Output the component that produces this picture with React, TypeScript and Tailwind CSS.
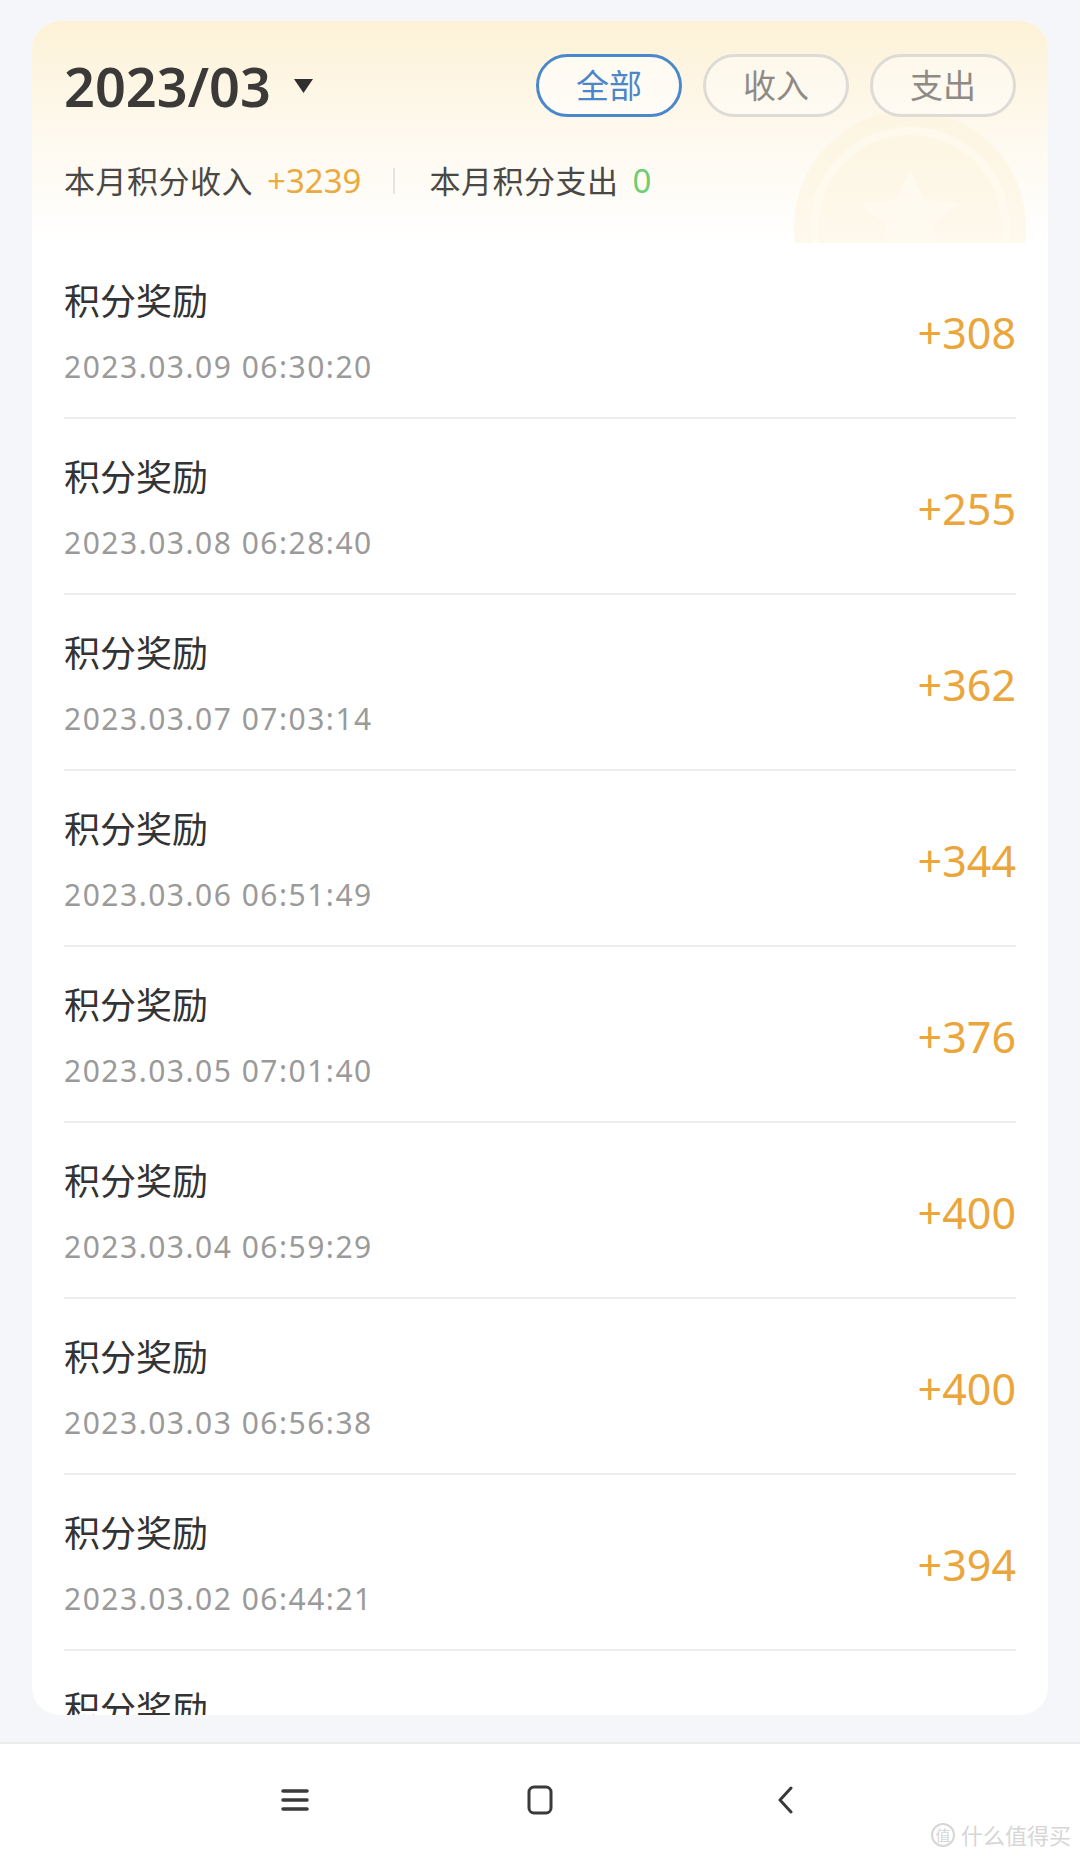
import React from 'react';

const records = [
  { date: '2023.03.09 06:30:20', amount: '+308' },
  { date: '2023.03.08 06:28:40', amount: '+255' },
  { date: '2023.03.07 07:03:14', amount: '+362' },
  { date: '2023.03.06 06:51:49', amount: '+344' },
  { date: '2023.03.05 07:01:40', amount: '+376' },
  { date: '2023.03.04 06:59:29', amount: '+400' },
  { date: '2023.03.03 06:56:38', amount: '+400' },
  { date: '2023.03.02 06:44:21', amount: '+394' },
  { date: '2023.03.01 06:40:12', amount: '+400' },
];

const font = { fontFamily: '"Noto Sans", "Noto Sans CJK SC", sans-serif' };

const CoinMark = () => (
  <svg className="absolute left-[761px] top-[89px]" width="234" height="133" viewBox="0 0 234 133">
    <circle cx="117" cy="117" r="116" fill="#fdf1d6" opacity="0.45" />
    <circle cx="117" cy="117" r="96" fill="none" stroke="#fffbf2" strokeWidth="8" opacity="0.6" />
    <path
      d="M117 58 L131 90 L166 93 L140 116 L148 150 L117 132 L86 150 L94 116 L68 93 L103 90 Z"
      fill="#fffbf1"
      opacity="0.7"
    />
  </svg>
);

const FilterButton = ({ label, active }: { label: string; active?: boolean }) => (
  <button
    className={
      active
        ? 'h-[63px] w-[146px] rounded-full border-[3px] border-[#4a87cb] bg-white/60 text-[33px] text-[#4a86c8]'
        : 'h-[63px] w-[146px] rounded-full border-[3px] border-[#dedbd6] bg-white/40 text-[33px] text-[#8e8b87]'
    }
  >
    {label}
  </button>
);

export default function App() {
  return (
    <div className="flex h-[1856px] w-[1080px] flex-col overflow-hidden bg-[#f5f6f9]" style={font}>
      {/* Card area */}
      <div className="flex-1 min-h-0 px-[32px] pt-[21px] pb-[27px]">
        <div className="flex h-full flex-col overflow-hidden rounded-[28px] bg-white">
          {/* Header */}
          <div className="relative h-[222px] flex-shrink-0 overflow-hidden bg-gradient-to-b from-[#fdf2d7] via-[#fef9ee] to-white px-[32px] pt-[33px]">
            <CoinMark />
            <div className="relative flex h-[63px] items-center justify-between">
              <div className="flex items-center">
                <span className="text-[54px] font-semibold leading-none text-[#3b3a38]">2023/03</span>
                <svg className="ml-[23px]" width="19" height="14" viewBox="0 0 19 14">
                  <path d="M0 0 H19 L9.5 14 Z" fill="#2f2f2f" />
                </svg>
              </div>
              <div className="flex gap-[21px]">
                <FilterButton label="全部" active />
                <FilterButton label="收入" />
                <FilterButton label="支出" />
              </div>
            </div>
            <div className="relative mt-[44px] flex h-[40px] items-center text-[31px] text-[#4a4845]">
              <span className="tracking-[0.5px]">本月积分收入</span>
              <span className="ml-[14px] text-[33px] text-[#ecaa3e]">+3239</span>
              <span className="ml-[32px] mr-[34px] h-[26px] w-[2px] bg-[#e6e4e0]" />
              <span className="tracking-[0.5px]">本月积分支出</span>
              <span className="ml-[14px] text-[33px] text-[#6fcd72]">0</span>
            </div>
          </div>

          {/* List */}
          <div className="flex flex-col">
            {records.map((r, i) => (
              <div
                key={i}
                className="mx-[32px] flex h-[176px] flex-shrink-0 items-center justify-between border-b-2 border-[#ececec]"
              >
                <div className="flex flex-col self-start pt-[37px]">
                  <span className="text-[36px] leading-[44px] text-[#333333]">积分奖励</span>
                  <span className="mt-[23px] text-[30px] leading-[40px] tracking-[1.5px] text-[#9a9a9a]">
                    {r.date}
                  </span>
                </div>
                <span className="mt-[4px] text-[43px] leading-none text-[#eaa63b]">{r.amount}</span>
              </div>
            ))}
          </div>
        </div>
      </div>

      {/* Navigation bar */}
      <div className="relative flex h-[114px] flex-shrink-0 items-center justify-center gap-[185px] border-t-2 border-[#ebebeb] bg-white">
        <div className="flex w-[60px] justify-center">
          <svg width="28" height="24" viewBox="0 0 28 24">
            <path d="M2 3 H26 M2 12 H26 M2 21 H26" stroke="#3a3a3a" strokeWidth="3.5" strokeLinecap="round" />
          </svg>
        </div>
        <div className="flex w-[60px] justify-center">
          <svg width="26" height="30" viewBox="0 0 26 30">
            <rect x="2" y="2" width="22" height="26" rx="5" fill="none" stroke="#3a3a3a" strokeWidth="3" />
          </svg>
        </div>
        <div className="flex w-[60px] justify-center">
          <svg width="18" height="28" viewBox="0 0 18 28">
            <path d="M15 2 L4 14 L15 26" fill="none" stroke="#3a3a3a" strokeWidth="3" strokeLinecap="round" strokeLinejoin="round" />
          </svg>
        </div>
        {/* watermark */}
        <div className="absolute bottom-[9px] right-[9px] flex items-center gap-[6px] text-[22px] leading-none text-[#d6d6d6]">
          <span className="flex h-[24px] w-[24px] items-center justify-center rounded-full border-2 border-[#d6d6d6] text-[15px]">
            值
          </span>
          <span>什么值得买</span>
        </div>
      </div>
    </div>
  );
}
